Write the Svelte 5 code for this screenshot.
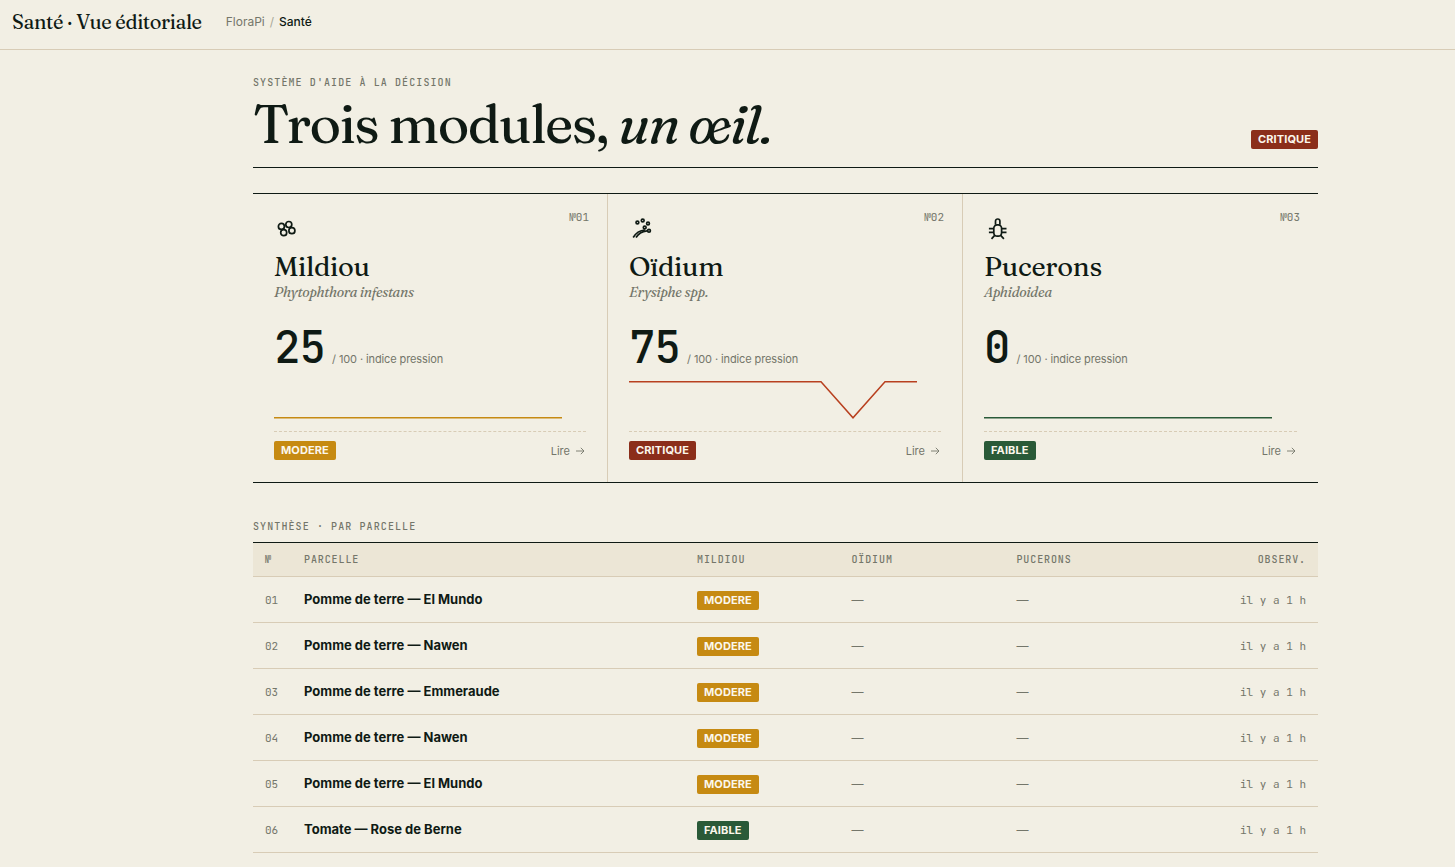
<script lang="ts">
	type Level = 'faible' | 'modere' | 'critique';

	interface Module {
		num: string;
		name: string;
		latin: string;
		icon: string;
		score: number;
		level: Level;
		trend: number[];
	}

	interface Plot {
		name: string;
		mildiou: Level;
		seen: string;
	}

	const STEP = 32;

	const modules: Module[] = [
		{
			num: '01',
			name: 'Mildiou',
			latin: 'Phytophthora infestans',
			icon: 'spores',
			score: 25,
			level: 'modere',
			trend: [0, 0, 0, 0, 0, 0, 0, 0, 0, 0]
		},
		{
			num: '02',
			name: 'Oïdium',
			latin: 'Erysiphe spp.',
			icon: 'powder',
			score: 75,
			level: 'critique',
			trend: [1, 1, 1, 1, 1, 1, 1, 0, 1, 1]
		},
		{
			num: '03',
			name: 'Pucerons',
			latin: 'Aphidoidea',
			icon: 'aphid',
			score: 0,
			level: 'faible',
			trend: [0, 0, 0, 0, 0, 0, 0, 0, 0, 0]
		}
	];

	const plots: Plot[] = [
		{ name: 'Pomme de terre — El Mundo', mildiou: 'modere', seen: 'il y a 1 h' },
		{ name: 'Pomme de terre — Nawen', mildiou: 'modere', seen: 'il y a 1 h' },
		{ name: 'Pomme de terre — Emmeraude', mildiou: 'modere', seen: 'il y a 1 h' },
		{ name: 'Pomme de terre — Nawen', mildiou: 'modere', seen: 'il y a 1 h' },
		{ name: 'Pomme de terre — El Mundo', mildiou: 'modere', seen: 'il y a 1 h' },
		{ name: 'Tomate — Rose de Berne', mildiou: 'faible', seen: 'il y a 1 h' }
	];

	function sparkline(values: number[]) {
		return values.map((v, i) => `${i * STEP},${37.75 - v * 36}`).join(' ');
	}
</script>

{#snippet badge(level: Level)}
	<span class="badge {level}">{level.toUpperCase()}</span>
{/snippet}

<header class="topbar">
	<strong class="brand">Santé · Vue éditoriale</strong>
	<nav class="crumbs" aria-label="Fil d'Ariane">
		<a href="#florapi">FloraPi</a>
		<span class="sep">/</span>
		<span class="current">Santé</span>
	</nav>
</header>

<main>
	<section class="hero">
		<div>
			<p class="eyebrow">SYSTÈME D'AIDE À LA DÉCISION</p>
			<h1>Trois modules, <em>un œil.</em></h1>
		</div>
		<div class="status">{@render badge('critique')}</div>
	</section>

	<section class="modules">
		{#each modules as mod}
			<article class="card">
				<span class="num">№{mod.num}</span>
				<svg class="icon" width="24" height="24" viewBox="0 0 24 24" aria-hidden="true">
					{#if mod.icon === 'spores'}
						<circle cx="7.4" cy="9.4" r="3" />
						<circle cx="14.8" cy="7.5" r="3" />
						<circle cx="17.9" cy="13.7" r="3" />
						<circle cx="9.7" cy="15.7" r="3" />
					{:else if mod.icon === 'powder'}
						<circle cx="8.4" cy="5.5" r="1.4" />
						<circle cx="13.7" cy="3.5" r="1.4" />
						<circle cx="19" cy="6.5" r="1.4" />
						<circle cx="15.7" cy="10.5" r="1.4" />
						<circle cx="20" cy="13.8" r="1.4" />
						<path d="M4.2 20.5C6.5 16.5 10.5 13.5 16 13" />
						<path d="M7 20.5C9 17 12.5 14.5 18 13.8" />
					{:else}
						<path d="M11.5 7.8V4.2a2.2 2.2 0 0 1 4.4 0v3.6" />
						<rect x="9.8" y="7.8" width="7.8" height="11.4" rx="3.4" />
						<path d="M9.8 11.6H4.9M9.8 15.4H4.9M17.6 11.6h4.9M17.6 15.4h4.9" />
						<path d="M10.7 18.4l-3.2 3.4M16.7 18.4l3.2 3.4" />
					{/if}
				</svg>
				<h2>{mod.name}</h2>
				<p class="latin">{mod.latin}</p>
				<p class="score">
					<span class="value">{mod.score}</span>
					<span class="unit">/ 100 · indice pression</span>
				</p>
				<svg class="spark {mod.level}" width="288" height="40" viewBox="0 0 288 40" aria-hidden="true">
					<polyline points={sparkline(mod.trend)} />
				</svg>
				<footer>
					{@render badge(mod.level)}
					<a class="read" href="#{mod.name.toLowerCase()}">
						Lire
						<svg width="10" height="10" viewBox="0 0 10 10" aria-hidden="true">
							<path d="M0 5h8M4.8 1.8L8 5L4.8 8.2" />
						</svg>
					</a>
				</footer>
			</article>
		{/each}
	</section>

	<section>
		<p class="eyebrow" id="summary">SYNTHÈSE · PAR PARCELLE</p>
		<table aria-labelledby="summary">
			<thead>
				<tr>
					<th class="col-num">№</th>
					<th class="col-plot">PARCELLE</th>
					<th class="col-mildiou">MILDIOU</th>
					<th class="col-oidium">OÏDIUM</th>
					<th>PUCERONS</th>
					<th class="right">OBSERV.</th>
				</tr>
			</thead>
			<tbody>
				{#each plots as plot, i}
					<tr>
						<td class="mono">{String(i + 1).padStart(2, '0')}</td>
						<td class="plot">{plot.name}</td>
						<td>{@render badge(plot.mildiou)}</td>
						<td class="empty">—</td>
						<td class="empty">—</td>
						<td class="mono right">{plot.seen}</td>
					</tr>
				{/each}
			</tbody>
		</table>
	</section>
</main>

<style>
	:global(body) {
		--ink: #0f1a14;
		--muted: #74766a;
		--rule: #d8ccb6;
		--serif: 'Fraunces', 'Liberation Serif', serif;
		--mono: 'JetBrains Mono', 'DejaVu Sans Mono', monospace;
		background: #f2efe4;
		color: var(--ink);
		font-family: Inter, sans-serif;
		font-size: 13px;
		overflow: hidden;
	}

	h1,
	h2,
	p {
		margin: 0;
		font-weight: 400;
	}

	a {
		color: inherit;
		text-decoration: none;
	}

	.topbar {
		display: flex;
		align-items: center;
		gap: 24px;
		min-height: 50px;
		padding: 0 12px 5px;
		box-sizing: border-box;
		border-bottom: 1px solid var(--rule);
	}

	.brand {
		font-family: var(--serif);
		font-size: 20px;
		font-weight: 500;
		line-height: 28px;
		letter-spacing: -0.02em;
	}

	.crumbs {
		display: flex;
		gap: 5px;
		font-size: 12px;
		line-height: 16px;
		color: var(--muted);
	}

	.sep {
		color: #a9a898;
	}

	.current {
		color: var(--ink);
		font-weight: 500;
	}

	main {
		padding: 26px 137px 0 253px;
	}

	.eyebrow {
		font-family: var(--mono);
		font-size: 10px;
		font-weight: 500;
		line-height: 14px;
		letter-spacing: 0.11em;
		color: var(--muted);
	}

	.hero {
		display: flex;
		justify-content: space-between;
		align-items: flex-end;
		padding-bottom: 15px;
		border-bottom: 1px solid var(--ink);
		margin-bottom: 25px;
	}

	h1 {
		font-family: var(--serif);
		font-size: 54px;
		line-height: 56px;
		letter-spacing: -0.03em;
		margin-top: 6px;
	}

	.status {
		display: flex;
		padding-bottom: 3px;
	}

	.badge {
		display: inline-block;
		padding: 3px 7px;
		border-radius: 2px;
		font-size: 11px;
		font-weight: 700;
		line-height: 13px;
		letter-spacing: 0.01em;
		color: #fbf7ec;
	}

	.badge.modere {
		background: #c68a12;
	}

	.badge.critique {
		background: #8b2e1a;
	}

	.badge.faible {
		background: #2a5a38;
	}

	.modules {
		display: grid;
		grid-template-columns: repeat(3, 1fr);
		border-top: 1px solid var(--ink);
		border-bottom: 1px solid var(--ink);
		margin-bottom: 37px;
	}

	.card {
		position: relative;
		padding: 23px 21px 22px;
		border-right: 1px solid var(--rule);
	}

	.card:last-child {
		border-right: none;
	}

	.num {
		position: absolute;
		top: 16px;
		right: 18px;
		font-family: var(--mono);
		font-size: 11px;
		line-height: 15px;
		color: var(--muted);
	}

	.icon {
		display: block;
		fill: none;
		stroke: var(--ink);
		stroke-width: 1.7;
	}

	h2 {
		font-family: var(--serif);
		font-size: 27px;
		font-weight: 500;
		line-height: 32px;
		letter-spacing: -0.01em;
		margin-top: 10px;
	}

	.latin {
		font-family: var(--serif);
		font-size: 14px;
		font-style: italic;
		line-height: 18px;
		letter-spacing: -0.02em;
		color: var(--muted);
	}

	.score {
		display: flex;
		align-items: baseline;
		gap: 7px;
		margin-top: 24px;
	}

	.value {
		font-family: var(--mono);
		font-size: 44px;
		font-weight: 500;
		line-height: 44px;
		letter-spacing: -0.02em;
	}

	.unit {
		font-size: 11px;
		line-height: 14px;
		letter-spacing: -0.01em;
		color: var(--muted);
	}

	.spark {
		display: block;
		max-width: 100%;
		margin-top: 11px;
		fill: none;
		stroke-width: 1.5;
	}

	.spark.modere {
		stroke: #c68a12;
	}

	.spark.critique {
		stroke: #b8401f;
	}

	.spark.faible {
		stroke: #2a5a38;
	}

	.card footer {
		display: flex;
		justify-content: space-between;
		align-items: center;
		margin-top: 11px;
		padding-top: 9px;
		border-top: 1px dashed var(--rule);
	}

	.read {
		display: flex;
		align-items: center;
		gap: 6px;
		font-size: 11px;
		line-height: 16px;
		color: var(--muted);
	}

	.read svg {
		fill: none;
		stroke: currentColor;
		stroke-width: 0.9;
	}

	table {
		width: 100%;
		margin-top: 8px;
		border-collapse: collapse;
		table-layout: fixed;
		border-top: 1px solid var(--ink);
	}

	th,
	td {
		box-sizing: border-box;
		padding: 0 12px;
		text-align: left;
		border-bottom: 1px solid var(--rule);
	}

	th {
		height: 34px;
		font-family: var(--mono);
		font-size: 10px;
		font-weight: 500;
		letter-spacing: 0.09em;
		color: var(--muted);
		background: #ece6d6;
	}

	td {
		height: 46px;
		padding-top: 13px;
		line-height: 18px;
		vertical-align: baseline;
	}

	.col-num {
		width: 39px;
	}

	.col-plot {
		width: 36.9%;
	}

	.col-mildiou {
		width: 14.5%;
	}

	.col-oidium {
		width: 15.5%;
	}

	.plot {
		font-weight: 700;
	}

	.mono {
		font-family: var(--mono);
		font-size: 11px;
		color: var(--muted);
	}

	.empty {
		color: var(--muted);
		font-size: 12px;
	}

	.right {
		text-align: right;
	}

	@media (max-width: 1100px) {
		main {
			padding: 26px 24px 0;
		}
	}
</style>
